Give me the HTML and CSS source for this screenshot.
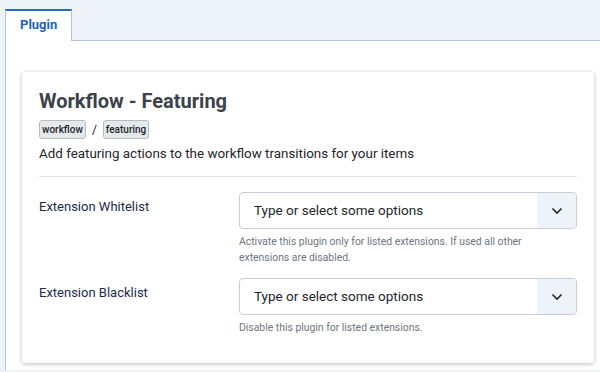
FILE: index.html
```html
<!DOCTYPE html>
<html lang="en">
<head>
    <meta charset="UTF-8">
    <title>Plugin: Workflow - Featuring</title>
    <link rel="stylesheet" href="styles.css">
</head>
<body>
    <div class="tabs">
        <div class="tab active">Plugin</div>
    </div>
    <div class="tab-panel">
        <div class="card">
            <h2 class="plugin-title">Workflow - Featuring</h2>
            <div class="plugin-path">
                <span class="badge">workflow</span>
                <span class="sep">/</span>
                <span class="badge">featuring</span>
            </div>
            <p class="plugin-desc">Add featuring actions to the workflow transitions for your items</p>
            <hr>

            <div class="field">
                <div class="field-label">Extension Whitelist</div>
                <div class="field-control">
                    <div class="choices">
                        <span class="choices-input">Type or select some options</span>
                        <span class="choices-arrow">
                            <svg width="12" height="8" viewBox="0 0 12 8"><path d="M1.5 1.5 L6 6 L10.5 1.5" fill="none" stroke="#22262a" stroke-width="1.6"/></svg>
                        </span>
                    </div>
                    <div class="help">Activate this plugin only for listed extensions. If used all other extensions are disabled.</div>
                </div>
            </div>

            <div class="field">
                <div class="field-label">Extension Blacklist</div>
                <div class="field-control">
                    <div class="choices">
                        <span class="choices-input">Type or select some options</span>
                        <span class="choices-arrow">
                            <svg width="12" height="8" viewBox="0 0 12 8"><path d="M1.5 1.5 L6 6 L10.5 1.5" fill="none" stroke="#22262a" stroke-width="1.6"/></svg>
                        </span>
                    </div>
                    <div class="help">Disable this plugin for listed extensions.</div>
                </div>
            </div>
        </div>
    </div>
</body>
</html>
```

FILE: styles.css
```css
body {
    margin: 0;
    padding-left: 5px;
    background: #eef2f9;
    font-family: Roboto, "Liberation Sans", sans-serif;
    color: #22262a;
}

.tabs {
    display: flex;
    height: 40px;
    border-bottom: 1px solid #b4c3d6;
    align-items: flex-end;
}

.tab {
    height: 32px;
    margin-bottom: -1px;
    padding: 0 14px;
    box-sizing: border-box;
    background: #fff;
    border-top: 2px solid #2a69b8;
    border-left: 1px solid #b4c3d6;
    border-right: 1px solid #b4c3d6;
    color: #2163b6;
    font-size: 13px;
    font-weight: 700;
    line-height: 28px;
    width: 67px;
}

.tab-panel {
    background: #fff;
    border-left: 1px solid #b4c3d6;
    padding: 31px 6px 7px 16px;
}

.card {
    width: 572px;
    box-sizing: border-box;
    padding: 16px 17px 27px 17px;
    border-radius: 4px;
    box-shadow: 0 1px 4px rgba(0, 0, 0, 0.28);
}

.plugin-title {
    margin: 0;
    font-size: 20px;
    font-weight: 700;
    line-height: 26px;
    color: #3d4249;
}

.plugin-path {
    display: flex;
    align-items: center;
    margin-top: 6px;
    height: 19px;
}

.badge {
    display: inline-block;
    height: 19px;
    box-sizing: border-box;
    padding: 0 2px;
    font-size: 10px;
    font-weight: 500;
    line-height: 17px;
    background: #e6e9ec;
    border: 1px solid #b7bcc2;
    border-radius: 3px;
    color: #22262a;
}

.sep {
    font-size: 12px;
    margin: 0 6px;
    color: #22262a;
}

.plugin-desc {
    margin: 6px 0 0 0;
    font-size: 13.4px;
    line-height: 17px;
}

hr {
    margin: 14px 0 15px 0;
    border: 0;
    border-top: 1px solid #dfe3e7;
}

.field {
    display: flex;
    margin-bottom: 12px;
}

.field:last-child {
    margin-bottom: 0;
}

.field-label {
    width: 200px;
    flex-shrink: 0;
    padding-top: 7px;
    font-size: 13px;
    color: #1c2b4c;
}

.field-control {
    flex: 1;
}

.choices {
    display: flex;
    height: 37px;
    box-sizing: border-box;
    border: 1px solid #c9ced5;
    border-radius: 4px;
    overflow: hidden;
}

.choices-input {
    flex: 1;
    padding-left: 14px;
    font-size: 13.5px;
    line-height: 35px;
    color: #22262a;
}

.choices-arrow {
    width: 39px;
    background: #eef2f9;
    display: flex;
    align-items: center;
    justify-content: center;
}

.help {
    margin-top: 5px;
    font-size: 10.4px;
    line-height: 16px;
    color: #6d757e;
    padding-right: 50px;
}
```
